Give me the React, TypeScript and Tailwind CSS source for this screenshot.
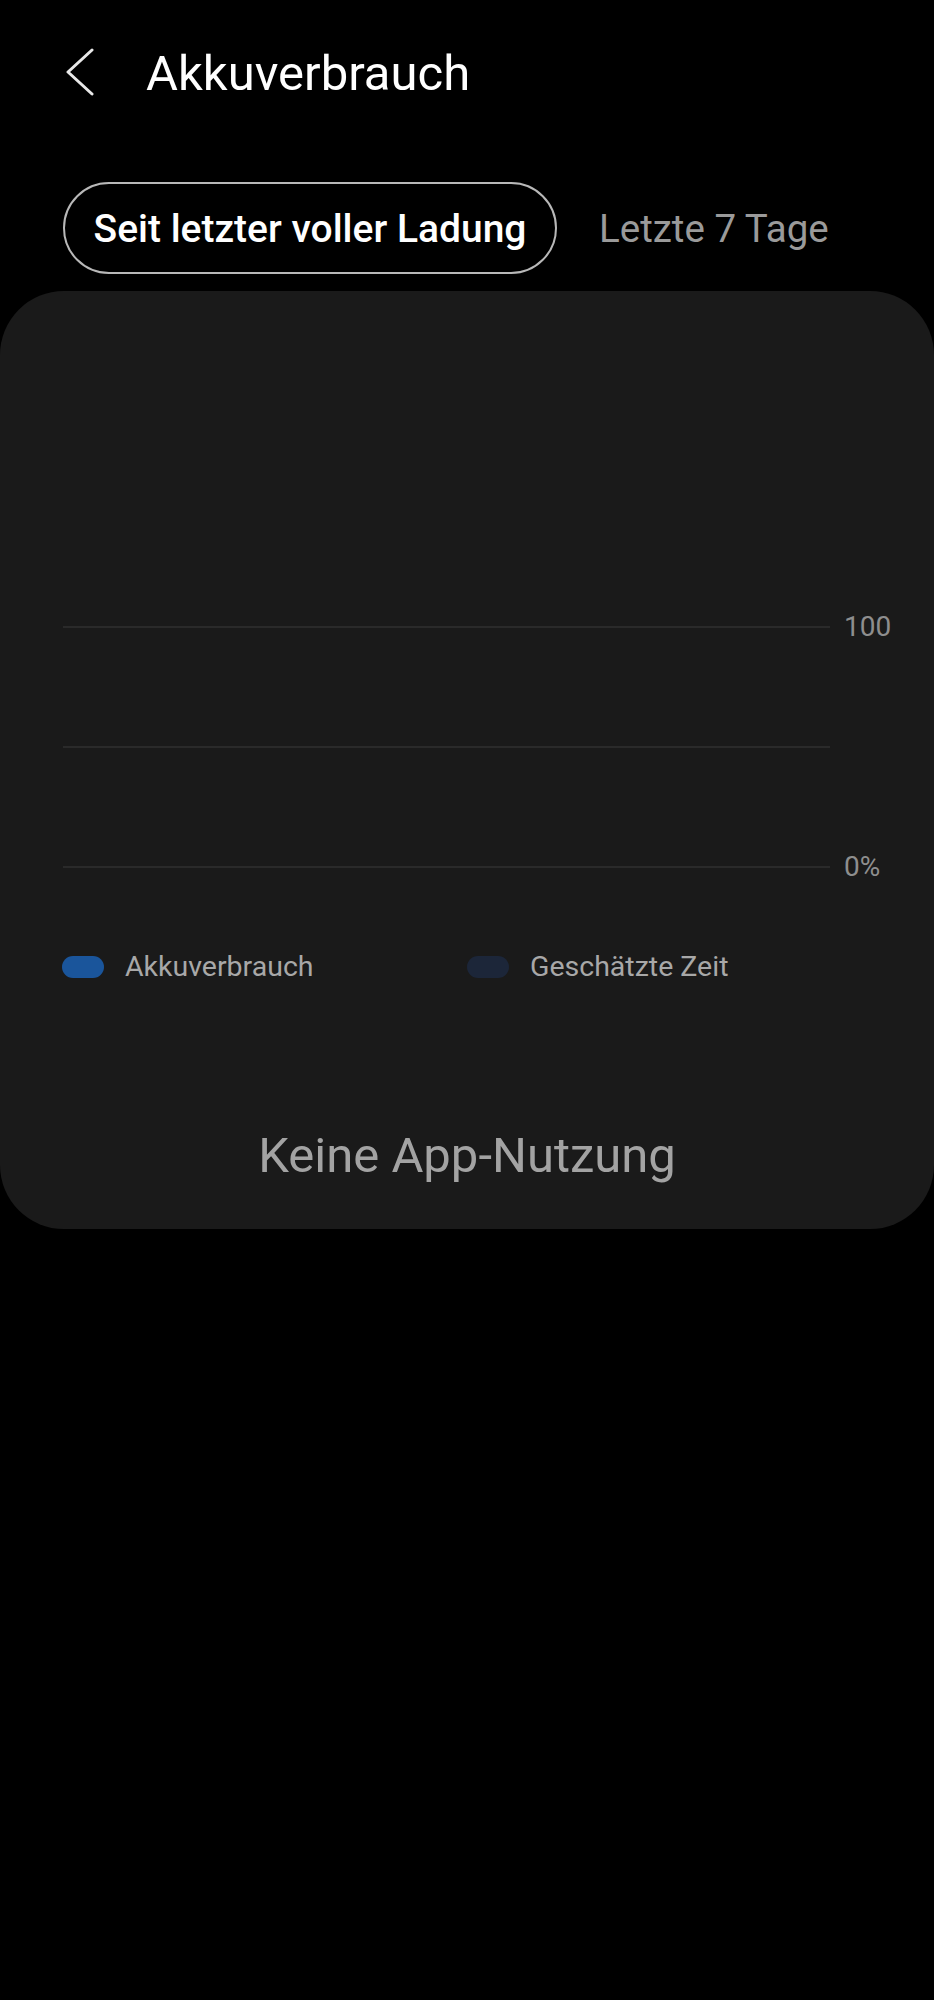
import React from "react";

const FONT = { fontFamily: "Roboto, 'Noto Sans', Arial, sans-serif" };

function BackChevron() {
  return (
    <svg width="28" height="48" viewBox="0 0 28 48" fill="none">
      <polyline
        points="26,2 2,24 26,46"
        stroke="#e8e8e8"
        strokeWidth="3"
        strokeLinecap="round"
        strokeLinejoin="round"
      />
    </svg>
  );
}

function GridRow({ label }: { label?: string }) {
  return (
    <div className="flex h-[40px] items-center pl-[63px]">
      <div className="h-[2px] w-[767px] bg-[#2a2a2a]" />
      <span className="ml-[14px] text-[28px] leading-none text-[#8e8e8e]">{label}</span>
    </div>
  );
}

function LegendItem({ color, label }: { color: string; label: string }) {
  return (
    <div className="flex items-center">
      <span className={`h-[22px] w-[42px] rounded-full ${color}`} />
      <span className="ml-[21px] text-[28.5px] leading-[40px] text-[#a8a8a8]">{label}</span>
    </div>
  );
}

export default function App() {
  return (
    <div className="min-h-[2000px] w-[934px] bg-black" style={FONT}>
      {/* header */}
      <div className="flex h-[144px] items-center pl-[66px]">
        <BackChevron />
        <h1 className="ml-[52px] mt-[4px] text-[49px] font-normal leading-[56px] text-white">Akkuverbrauch</h1>
      </div>

      {/* tabs */}
      <div className="mt-[38px] flex items-center pl-[63px]">
        <button
          type="button"
          className="flex h-[92px] w-[494px] items-center justify-center rounded-full border-2 border-[#b8b8b8] pt-[2px] text-[39px] font-medium text-white"
        >
          Seit letzter voller Ladung
        </button>
        <span className="ml-[42px] pt-[2px] text-[38.5px] text-[#9a9a9a]">Letzte 7 Tage</span>
      </div>

      {/* chart card */}
      <div className="mt-[17px] h-[938px] rounded-[64px] bg-[#1a1a1a] pt-[316px]">
        <div className="flex flex-col gap-[80px]">
          <GridRow label="100" />
          <GridRow />
          <GridRow label="0%" />
        </div>

        <div className="mt-[60px] flex pl-[62px]">
          <div className="w-[405px]">
            <LegendItem color="bg-[#1a559b]" label="Akkuverbrauch" />
          </div>
          <LegendItem color="bg-[#1c2639]" label="Geschätzte Zeit" />
        </div>

        <p className="mt-[141px] text-center text-[49px] leading-[56px] text-[#a3a3a3]">
          Keine App-Nutzung
        </p>
      </div>
    </div>
  );
}
